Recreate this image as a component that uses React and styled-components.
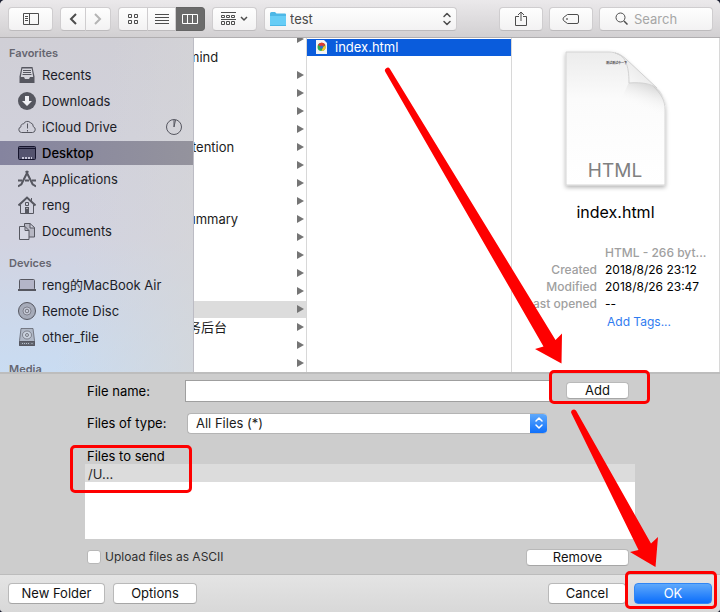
import React from "react";
import styled, { createGlobalStyle, css } from "styled-components";

const GlobalStyle = createGlobalStyle`
  * { box-sizing: border-box; }
  body { margin: 0; background: #1d2033; }
  body, button, input, select {
    font-family: Inter, "Noto Sans CJK SC", sans-serif;
    font-size: 13px;
    line-height: 18px;
    color: #1c1c20;
  }
  ul, dl, dd, h2, h3 { margin: 0; padding: 0; list-style: none; }
`;

const Dialog = styled.main`
  position: relative;
  display: flex;
  flex-direction: column;
  height: 100vh;
  overflow: hidden;
  border-radius: 5px 5px 4px 4px;
  background: #cdcdcd;
`;

/* Toolbar */
const Toolbar = styled.header`
  display: flex;
  align-items: center;
  gap: 7px;
  height: 38px;
  padding: 0 7px 0 8px;
  background: linear-gradient(#ebe9eb, #d2d0d2);
  border-bottom: 1px solid #b0aeb0;
`;
const raised = css`
  height: 24px;
  border: 1px solid #cfcdcf;
  border-bottom-color: #bdbbbd;
  border-radius: 4px;
  background: linear-gradient(#fefefe, #f3f2f3);
`;
const ToolButton = styled.button`
  ${raised}
  display: flex;
  align-items: center;
  justify-content: center;
  gap: 4px;
  padding: 0;
  width: ${(p) => p.$width}px;
  color: ${(p) => (p.disabled ? "#b4b4b4" : "#4d4d4d")};
`;
const ButtonGroup = styled.div`
  display: flex;
  ${ToolButton} { border-radius: 0; }
  ${ToolButton} + ${ToolButton} { border-left: 0; }
  ${ToolButton}:first-child { border-radius: 4px 0 0 4px; }
  ${ToolButton}:last-child { border-radius: 0 4px 4px 0; }
  ${ToolButton}[aria-pressed="true"] {
    background: #6b6b6b;
    border-color: #656565;
    color: #fff;
  }
`;
const PathPicker = styled.div`
  ${raised}
  display: flex;
  align-items: center;
  flex: 0 1 193px;
  padding: 0 4px 0 5px;
  gap: 4px;
  color: #4d4d4d;
`;
const BareSelect = styled.select`
  appearance: none;
  flex: 1;
  min-width: 0;
  padding: 0;
  border: 0;
  outline: 0;
  background: transparent;
  color: ${(p) => p.$color || "#1c1c20"};
`;
const ToolbarEnd = styled.div`
  display: flex;
  gap: 6px;
  margin-left: auto;
`;
const SearchBox = styled.label`
  ${raised}
  display: flex;
  align-items: center;
  gap: 6px;
  width: 114px;
  padding: 0 15px;
  color: #4d4d4d;
`;
const SearchInput = styled.input`
  flex: 1;
  min-width: 0;
  padding: 0;
  border: 0;
  outline: 0;
  background: transparent;
  &::placeholder { color: #a6a6a6; opacity: 1; }
`;

/* File browser */
const Browser = styled.section`
  display: flex;
  flex: 1;
  min-height: 0;
  overflow: hidden;
  background: #fff;
`;
const Sidebar = styled.nav`
  flex: 0 0 194px;
  overflow: hidden;
  padding-top: 5px;
  border-right: 1px solid #bcbcc4;
  background:
    linear-gradient(100deg, transparent 45%, rgba(214, 214, 214, 0.75)),
    linear-gradient(#d0cfd6, #d2d3e0 60%, #c9dcf2);
`;
const SideSection = styled.section`
  margin-bottom: 10px;
`;
const SideHeading = styled.h2`
  padding-left: 9px;
  font-size: 11px;
  font-weight: 600;
  line-height: 20px;
  color: #65656f;
`;
const SideList = styled.ul`
  display: flex;
  flex-direction: column;
  gap: 2px;
`;
const SideItem = styled.li`
  display: flex;
  align-items: center;
  gap: 6px;
  height: 24px;
  padding: 0 11px 0 18px;
  color: ${(p) => (p.$active ? "#000" : "#1c1d28")};
  font-weight: ${(p) => (p.$active ? 500 : 400)};
  background: ${(p) => (p.$active ? "linear-gradient(90deg, #85849f, #94939d)" : "none")};
  svg { flex: none; color: ${(p) => (p.$active ? "#15142c" : "#565760")}; }
`;
const SideName = styled.span`
  flex: 1;
  white-space: nowrap;
`;
const Column = styled.div`
  flex: ${(p) => p.$flex};
  min-width: 0;
  overflow: hidden;
  border-right: 1px solid #d8d8d8;
`;
const FolderList = styled.ul`
  margin-top: -8px;
`;
const FolderRow = styled.li`
  display: flex;
  align-items: center;
  justify-content: space-between;
  height: 18px;
  padding: 0 2px 1px 0;
  border-top: 1px solid #fff;
  background: ${(p) => (p.$active ? "#dcdcdc" : "none")};
  svg { color: #757575; }
`;
const FolderName = styled.span`
  margin-left: -6px;
  line-height: 16px;
  white-space: nowrap;
`;
const FileRow = styled.div`
  display: flex;
  align-items: center;
  gap: 7px;
  height: 18px;
  padding: 0 0 1px 8px;
  border-top: 1px solid #fff;
  background: #0a5cdc;
  color: #fff;
  line-height: 16px;
`;
const Preview = styled.aside`
  display: flex;
  flex-direction: column;
  align-items: center;
  flex: 1 1 208px;
  min-width: 0;
  padding-top: 10px;
  overflow: hidden;
  border-right: 1px solid #d8d8d8;
`;
const FileTitle = styled.h3`
  padding: 8px 0 20px;
  font-size: 16px;
  font-weight: 400;
  line-height: 24px;
  color: #000;
`;
const Details = styled.dl`
  display: grid;
  grid-template-columns: 85px 1fr;
  column-gap: 8px;
  width: 100%;
  font-size: 12px;
  line-height: 17px;
`;
const Term = styled.dt`
  display: flex;
  justify-content: flex-end;
  white-space: nowrap;
  font-weight: 500;
  color: #a0a0a0;
`;
const Value = styled.dd`
  grid-column: 2;
  overflow: hidden;
  white-space: nowrap;
  font-weight: ${(p) => (p.$muted ? 500 : 400)};
  color: ${(p) => (p.$muted ? "#a0a0a0" : "#000")};
`;
const TagLink = styled.a`
  display: block;
  padding: 1px 2px;
  color: #2f7bf0;
  text-decoration: none;
`;

/* Form */
const Form = styled.form`
  display: flex;
  flex-direction: column;
  height: 202px;
  padding: 1px 85px 0;
  border-top: 2px solid #bdbdbd;
`;
const Field = styled.div`
  display: flex;
  align-items: center;
  height: 32px;
  label { flex: 0 0 100px; padding-left: 2px; color: #000; }
`;
const NameInput = styled.input`
  flex: 1;
  min-width: 0;
  height: 22px;
  padding: 0 4px;
  border: 1px solid #9f9f9f;
  outline: 0;
  background: #fff;
`;
const TypePicker = styled.div`
  display: flex;
  flex: 1;
  height: 21px;
  margin: 0 88px 0 2px;
  padding-left: 8px;
  overflow: hidden;
  border: 1px solid #b4b4b4;
  border-width: 1px 0 1px 1px;
  border-radius: 4px;
  background: #fff;
`;
const Stepper = styled.span`
  display: flex;
  align-items: center;
  justify-content: center;
  width: 17px;
  color: #fff;
  background: linear-gradient(#5fa9fb, #0f70fb);
`;
const Button = styled.button`
  height: ${(p) => (p.$small ? 17 : 21)}px;
  width: ${(p) => p.$width}px;
  padding: 0;
  border: 1px solid #b9b9b9;
  border-bottom-color: #a6a6a6;
  border-radius: 4px;
  background: #fff;
  color: #111;
  line-height: 15px;
  ${(p) => p.$primary && css`
    border-color: #2f86f5;
    background: linear-gradient(#5fa9fb, #0a6dfb);
    color: #fff;
  `}
`;
const Marked = styled.div`
  position: relative;
  display: flex;
  flex-direction: column;
  &::after {
    content: "";
    position: absolute;
    inset: ${(p) => p.$inset};
    border: 3px solid #fe0000;
    border-radius: 5px;
    pointer-events: none;
  }
`;
const AddSlot = styled.div`
  margin: 0 6px 2px 14px;
`;
const SendArea = styled.div`
  margin-top: 9px;
  color: #000;
`;
const SendHeader = styled.div`
  width: 100px;
  padding-left: 2px;
  white-space: nowrap;
  line-height: 16px;
`;
const SendList = styled.ul`
  height: 75px;
  background: #fff;
`;
const SendRow = styled.li`
  padding: 1px 3px;
  line-height: 18px;
  background: #dcdcdc;
  color: #2a2a2a;
  height: 18px;
`;
const SendActions = styled.div`
  display: flex;
  align-items: center;
  justify-content: space-between;
  padding: 9px 6px 0 2px;
`;
const CheckLabel = styled.label`
  display: flex;
  align-items: center;
  gap: 4px;
  font-size: 12px;
  color: #2f2f2f;
`;
const CheckBox = styled.input`
  appearance: none;
  width: 14px;
  height: 14px;
  margin: 0;
  border: 1px solid #b8b8b8;
  border-radius: 3px;
  background: #fff;
`;
const Footer = styled.footer`
  display: flex;
  align-items: flex-start;
  gap: 8px;
  height: 38px;
  padding: 8px 8px 0;
  border-top: 1px solid #bcbcbc;
  background: linear-gradient(#e4e4e4, #d8d8d8);
`;
const FooterEnd = styled.div`
  display: flex;
  gap: 8px;
  margin-left: auto;
`;
const Arrows = styled.svg`
  position: absolute;
  right: 0;
  bottom: 0;
  pointer-events: none;
`;

const Icon = ({ w = 18, h = 18, children, ...rest }) => (
  <svg width={w} height={h} viewBox={`0 0 ${w} ${h}`} fill="none" stroke="currentColor" aria-hidden="true" {...rest}>
    {children}
  </svg>
);

const icons = {
  recents: (
    <Icon>
      <path d="M3.500 1h11l2 9.500V17H1.500v-6.500z" fill="currentColor" stroke="none" />
      <path d="M4.300 2.500h9.400l1.500 8.500h-3.200l-1 2H7l-1-2H2.800z" fill="#d4d4db" stroke="none" />
      <path d="M5 4.500h8M5 6.500h8M4.500 8.500h9" />
    </Icon>
  ),
  downloads: (
    <Icon>
      <circle cx="9" cy="9" r="9" fill="currentColor" stroke="none" />
      <path d="M7 4h4v5h3l-5 5-5-5h3z" fill="#f1f1f5" stroke="none" />
    </Icon>
  ),
  cloud: (
    <Icon>
      <path d="M3.500 14.500h11a3 3 0 0 0 .8-5.800 4 4 0 0 0-2.800-4 4.200 4.200 0 0 0-7 1.300 2.200 2.200 0 0 0-2.500 2.800 2.900 2.900 0 0 0 .5 5.700z" />
      <path d="M9.500 5.500v5M9.500 12v1.500" />
    </Icon>
  ),
  desktop: (
    <Icon>
      <rect x=".5" y="2.500" width="17" height="13" rx="1" fill="#55546f" />
      <path d="M1 4.500h16" />
      <path d="M4 14h2M7 14h2M10 14h2M13 14h1" stroke="#c6c5d6" strokeWidth="2" />
    </Icon>
  ),
  applications: (
    <Icon>
      <path d="M10 1L3 15M8 1l7 14" strokeWidth="2" />
      <path d="M0 10.500h4M7 10.500h4M14 10.500h4M0 16.500l3-2M18 16.500l-3-2" strokeWidth="2" />
    </Icon>
  ),
  home: (
    <Icon>
      <path d="M.5 9.500L9 1.500l8.500 8" strokeWidth="2" />
      <path d="M13.500 2v3M2.500 9v8.500h13V9M7.500 6.500h3v3h-3z" />
      <path d="M7 11h4v6H7z" fill="currentColor" stroke="none" />
      <path d="M8.500 12h1v1h-1z" fill="#eee" stroke="none" />
    </Icon>
  ),
  documents: (
    <Icon>
      <path d="M6.500 4V1.500H12l4.500 4V15H11M12 1.500V6h4.500" fill="#b7b7c3" />
      <path d="M1.500 4.500h5.500l4 4v9H1.500zM7 4.500v4h4" fill="#d5d6e2" />
    </Icon>
  ),
  laptop: (
    <Icon>
      <rect x="1.500" y="3.500" width="15" height="10" rx="1" fill="#b4b5c8" />
      <path d="M0 14h18" strokeWidth="2" />
    </Icon>
  ),
  disc: (
    <Icon>
      <circle cx="9" cy="9" r="8.500" fill="#a6abb9" />
      <circle cx="9" cy="9" r="4" fill="#c7cbd8" strokeOpacity=".6" />
      <circle cx="9" cy="9" r="1.800" strokeOpacity=".7" />
    </Icon>
  ),
  drive: (
    <Icon>
      <path d="M3 .5h12l1.500 12v5h-15v-5z" fill="#b0b8c6" strokeOpacity=".7" />
      <path d="M1.500 13.500h15v4h-15z" fill="#62666f" />
      <ellipse cx="9" cy="7" rx="4.500" ry="4" fill="#cbd3df" strokeOpacity=".6" />
      <circle cx="9" cy="7" r="1.500" strokeOpacity=".7" />
      <path d="M4 15.500h8M13.500 15.500h1" stroke="#b8c0cc" strokeDasharray="1 1" />
    </Icon>
  ),
};

const UpDown = ({ wide }) => (
  <Icon w={10} h={14} strokeWidth="1.500" strokeLinecap="round" strokeLinejoin="round">
    <path d={wide ? "M2 4.500l3-3 3 3M2 9.500l3 3 3-3" : "M2 5l3-3 3 3M2 9l3 3 3-3"} />
  </Icon>
);

const sections = [
  {
    title: "Favorites",
    items: [
      ["Recents", "recents"],
      ["Downloads", "downloads"],
      ["iCloud Drive", "cloud"],
      ["Desktop", "desktop"],
      ["Applications", "applications"],
      ["reng", "home"],
      ["Documents", "documents"],
    ],
  },
  {
    title: "Devices",
    items: [
      ["reng的MacBook Air", "laptop"],
      ["Remote Disc", "disc"],
      ["other_file", "drive"],
    ],
  },
  { title: "Media", items: [] },
];

const folders = [
  "", "mind", "", "", "", "", "ttention", "", "", "", "ummary",
  "", "", "", "", "", "务后台", "", "",
];
const PLAIN_FILE = 1;
const OPEN_FOLDER = 15;

const DocumentArt = () => (
  <svg width="112" height="144" viewBox="0 0 112 144" role="img" aria-label="HTML document">
    <defs>
      <linearGradient id="paper" x1="0" y1="0" x2="0" y2="1">
        <stop offset="0" stopColor="#ececec" />
        <stop offset=".35" stopColor="#fbfbfb" />
        <stop offset="1" stopColor="#fff" />
      </linearGradient>
      <linearGradient id="curl" x1="0" y1="1" x2=".6" y2=".4">
        <stop offset="0" stopColor="#fff" />
        <stop offset="1" stopColor="#eaeaea" />
      </linearGradient>
      <linearGradient id="shade" x1=".7" y1="0" x2=".3" y2="1">
        <stop offset="0" stopColor="#b8b8b8" />
        <stop offset=".6" stopColor="#fff" stopOpacity="0" />
      </linearGradient>
      <filter id="shadow" x="-10%" y="-10%" width="120%" height="120%">
        <feDropShadow dx="0" dy="2" stdDeviation="2" floodOpacity=".3" />
      </filter>
    </defs>
    <path d="M6 4h43c8 0 13 4 18 9l26 25c8 8 12 14 12 24v75H6z" fill="url(#paper)" stroke="#d4d4d4" filter="url(#shadow)" />
    <path d="M69 34c14 0 24 2 31 9 3 4 5 10 5 16v20L60 54z" fill="url(#shade)" opacity=".6" />
    <path d="M55 5c10 2 14 12 14 30 14-1 22 1 28 5L67 12c-4-4-8-6-12-7z" fill="url(#curl)" stroke="#d2d2d2" />
    <text x="46" y="16" fontSize="3" fontWeight="700" fill="#444">测试测试中一下</text>
    <text x="55" y="129" textAnchor="middle" fontSize="19" fill="#808080">HTML</text>
  </svg>
);

export default function App() {
  return (
    <>
      <GlobalStyle />
      <Dialog>
        <Toolbar>
          <ToolButton $width={45} aria-label="Toggle sidebar">
            <Icon w={16} h={12}>
              <path d="M.5.500h15v11H.5zM6.500.500v11M2 3.500h3M2 5.500h3M2 7.500h3" />
            </Icon>
          </ToolButton>
          <ButtonGroup>
            <ToolButton $width={26} aria-label="Back">
              <Icon w={8} h={12} strokeWidth="2"><path d="M7 1L2 6l5 5" /></Icon>
            </ToolButton>
            <ToolButton $width={25} aria-label="Forward" disabled>
              <Icon w={8} h={12} strokeWidth="2"><path d="M1 1l5 5-5 5" /></Icon>
            </ToolButton>
          </ButtonGroup>
          <ButtonGroup>
            <ToolButton $width={30} aria-label="Icon view" aria-pressed="false">
              <Icon w={10} h={10}>
                <path d="M.5.500h3v3h-3zM6.500.500h3v3h-3zM.5 6.500h3v3h-3zM6.500 6.500h3v3h-3z" />
              </Icon>
            </ToolButton>
            <ToolButton $width={28} aria-label="List view" aria-pressed="false">
              <Icon w={14} h={10}><path d="M0 .5h14M0 3.500h14M0 6.500h14M0 9.500h14" /></Icon>
            </ToolButton>
            <ToolButton $width={29} aria-label="Column view" aria-pressed="true">
              <Icon w={16} h={10}><path d="M.5.500h15v9H.5zM5.500.500v9M10.500.500v9" /></Icon>
            </ToolButton>
          </ButtonGroup>
          <ToolButton $width={45} aria-label="Group items">
            <Icon w={15} h={13}>
              <path d="M0 .5h15M.5 3.500h3v2h-3zM5.500 3.500h3v2h-3zM10.500 3.500h3v2h-3zM0 7.500h15M.5 9.500h3v3h-3zM5.500 9.500h3v3h-3zM10.500 9.500h3v3h-3z" />
            </Icon>
            <Icon w={8} h={6} strokeWidth="1.500"><path d="M1 1l3 3 3-3" /></Icon>
          </ToolButton>
          <PathPicker>
            <Icon w={16} h={14} stroke="none">
              <path d="M0 1.500Q0 0 1.500 0H5l1.500 1.500H15q1 0 1 1V14H0z" fill="#4db7e6" />
              <path d="M0 4h16v9H0z" fill="#67cdf6" />
            </Icon>
            <BareSelect aria-label="Folder" $color="#4a4a4a">
              <option>test</option>
            </BareSelect>
            <UpDown wide />
          </PathPicker>
          <ToolbarEnd>
            <ToolButton $width={44} aria-label="Share">
              <Icon w={12} h={16}>
                <path d="M4 5.500H.5v9h11v-9H8M6 10V1M3 4l3-3 3 3" />
              </Icon>
            </ToolButton>
            <ToolButton $width={44} aria-label="Edit tags">
              <Icon w={18} h={12}>
                <path d="M5.500 1.500H15q1.500 0 1.500 1.500v6q0 1.500-1.500 1.500H5.500L1.500 7.500q-1-1.500 0-3z" />
                <circle cx="5" cy="6" r=".5" />
              </Icon>
            </ToolButton>
            <SearchBox>
              <Icon w={13} h={13}>
                <circle cx="5.500" cy="5.500" r="4.500" />
                <path d="M9 9l3.500 3.500" strokeWidth="1.500" />
              </Icon>
              <SearchInput aria-label="Search" placeholder="Search" />
            </SearchBox>
          </ToolbarEnd>
        </Toolbar>

        <Browser>
          <Sidebar>
            {sections.map((section) => (
              <SideSection key={section.title}>
                <SideHeading>{section.title}</SideHeading>
                <SideList>
                  {section.items.map(([name, icon]) => (
                    <SideItem key={name} $active={name === "Desktop"}>
                      {icons[icon]}
                      <SideName>{name}</SideName>
                      {icon === "cloud" && (
                        <Icon w={16} h={16}>
                          <circle cx="8" cy="8" r="7.500" />
                          <path d="M8 8V1M8 8l1.500-7" />
                        </Icon>
                      )}
                    </SideItem>
                  ))}
                </SideList>
              </SideSection>
            ))}
          </Sidebar>
          <Column $flex="0 0 113px">
            <FolderList>
              {folders.map((name, i) => (
                <FolderRow key={i} $active={i === OPEN_FOLDER}>
                  <FolderName>{name}</FolderName>
                  {i !== PLAIN_FILE && (
                    <Icon w={7} h={8} stroke="none"><path d="M0 0L7 4 0 8z" fill="currentColor" /></Icon>
                  )}
                </FolderRow>
              ))}
            </FolderList>
          </Column>
          <Column $flex="1 1 205px">
            <FileRow>
              <Icon w={13} h={14} stroke="none">
                <path d="M1 0h8l3 3v11H1z" fill="#f4f4f4" />
                <circle cx="6.500" cy="7" r="4" fill="#2da94f" />
                <path d="M3 5a4 4 0 0 1 7.500 0L6.500 7z" fill="#de3b2f" />
                <path d="M10.500 5.500A4 4 0 0 1 6.500 11l1.500-4z" fill="#f8c72c" />
                <circle cx="6.500" cy="7" r="1.500" fill="#3367d6" />
              </Icon>
              <span>index.html</span>
            </FileRow>
          </Column>
          <Preview>
            <DocumentArt />
            <FileTitle>index.html</FileTitle>
            <Details>
              <Value $muted>HTML - 266 byt...</Value>
              <Term>Created</Term>
              <Value>2018/8/26 23:12</Value>
              <Term>Modified</Term>
              <Value>2018/8/26 23:47</Value>
              <Term>Last opened</Term>
              <Value>--</Value>
              <Value><TagLink href="#tags">Add Tags...</TagLink></Value>
            </Details>
          </Preview>
        </Browser>

        <Form id="send" onSubmit={(e) => e.preventDefault()}>
          <Field>
            <label htmlFor="file-name">File name:</label>
            <NameInput id="file-name" />
            <AddSlot>
              <Marked $inset="-12px -21px -5px -17px">
                <Button type="button" $small $width={63}>Add</Button>
              </Marked>
            </AddSlot>
          </Field>
          <Field>
            <label htmlFor="file-type">Files of type:</label>
            <TypePicker>
              <BareSelect id="file-type">
                <option>All Files (*)</option>
              </BareSelect>
              <Stepper><UpDown /></Stepper>
            </TypePicker>
          </Field>
          <SendArea>
            <SendHeader>
              <Marked $inset="-3px -7px -29px -17px"><span id="send-label">Files to send</span></Marked>
            </SendHeader>
            <SendList aria-labelledby="send-label">
              <SendRow>/U...</SendRow>
            </SendList>
          </SendArea>
          <SendActions>
            <CheckLabel>
              <CheckBox type="checkbox" />
              Upload files as ASCII
            </CheckLabel>
            <Button type="button" $small $width={103}>Remove</Button>
          </SendActions>
        </Form>

        <Footer>
          <Button type="button" $width={97}>New Folder</Button>
          <Button type="button" $width={84}>Options</Button>
          <FooterEnd>
            <Button type="button" $width={78}>Cancel</Button>
            <Marked $inset="-12px -5px -5px -9px">
              <Button type="submit" form="send" $width={78} $primary>OK</Button>
            </Marked>
          </FooterEnd>
        </Footer>

        <Arrows width="340" height="550" viewBox="380 62 340 550" fill="#fe0000" aria-hidden="true">
          <path d="M385.400 72a2.500 2.500 0 0 1 4.600-3L555.500 340l6.500-6.500-.5 30L535 349l8.500-2.500z" />
          <path d="M571.500 413.500a2.500 2.500 0 0 1 4.800-2.500L651 543.500l7-6.500-2.500 30L630 552l8.500-2z" />
        </Arrows>
      </Dialog>
    </>
  );
}
